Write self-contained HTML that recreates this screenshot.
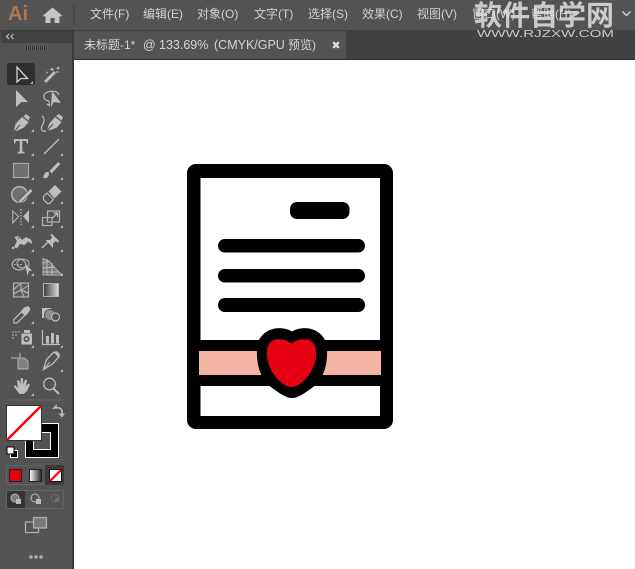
<!DOCTYPE html>
<html><head><meta charset="utf-8">
<style>
html,body{margin:0;padding:0;width:635px;height:569px;overflow:hidden;background:#fff}
body{position:relative;font-family:"Liberation Sans","Noto Sans CJK SC",sans-serif}
.a{position:absolute}
.m{position:absolute;top:7px;font-size:12px;line-height:15px;color:#d2d2d2;white-space:nowrap}
.t{position:absolute;top:38px;font-size:12.500px;line-height:15px;color:#d4d4d4;white-space:nowrap}
</style></head><body>
<div class="a" style="left:0;top:0;width:635px;height:31px;background:#535353;border-bottom:1px solid #3c3c3c;box-sizing:border-box"></div>
<div class="a" style="left:8px;top:1px;font-size:20px;line-height:26px;font-weight:bold;color:#ad7753">Ai</div>
<svg class="a" style="left:42px;top:6px" width="22" height="18" viewBox="0 0 22 18"><path d="M1 9.500 10.500 1.500 20 9.500 18.800 10.800 17.500 10V17H12.500V12H8.500V17H3.500V10L2.200 10.800Z" fill="#c4c4c4"/></svg>
<div class="a" style="left:73px;top:5px;width:2px;height:20px;background:#484848"></div>
<div class="m" style="left:90px">文件(F)</div>
<div class="m" style="left:143px">编辑(E)</div>
<div class="m" style="left:197px">对象(O)</div>
<div class="m" style="left:254px">文字(T)</div>
<div class="m" style="left:308px">选择(S)</div>
<div class="m" style="left:362px">效果(C)</div>
<div class="m" style="left:417px">视图(V)</div>
<div class="m" style="left:472px">窗口(W)</div>
<div class="m" style="left:531px">帮助(H)</div>
<svg class="a" style="left:621px;top:10px" width="11" height="8"><path d="M1.500 1.500 5.500 5.500 9.500 1.500" fill="none" stroke="#d0d0d0" stroke-width="1.500"/></svg>

<div class="a" style="left:0;top:31px;width:73px;height:538px;background:#535353"></div>
<div class="a" style="left:72px;top:30px;width:2px;height:539px;background:#3a3a3a"></div>
<div class="a" style="left:1px;top:31px;width:71px;height:12px;background:#424242"></div>
<svg class="a" style="left:5px;top:33px" width="10" height="8"><path d="M4 1 1.500 3.500 4 6M8.500 1 6 3.500 8.500 6" fill="none" stroke="#c0c0c0" stroke-width="1.200"/></svg>
<div class="a" style="left:26px;top:46px;width:19px;height:4px;background:repeating-linear-gradient(90deg,#2f2f2f 0 1px,#666 1px 2px)"></div>

<div class="a" style="left:74px;top:30px;width:561px;height:30px;background:#414141;border-bottom:1px solid #2e2e2e;box-sizing:border-box"></div>
<div class="a" style="left:74px;top:31px;width:272px;height:28px;background:#535353"></div>
<div class="t" style="left:84px;font-size:12px">未标题-1*</div>
<div class="t" style="left:143px">@</div>
<div class="t" style="left:159px">133.69%</div>
<div class="t" style="left:214px">(CMYK/GPU</div>
<div class="t" style="left:288px;font-size:12px">预览)</div>
<svg class="a" style="left:332px;top:41px" width="8" height="8"><path d="M1.200 1.200 6.800 6.800M6.800 1.200 1.200 6.800" stroke="#e2e2e2" stroke-width="2.200"/></svg>

<div class="a" style="left:7px;top:63px;width:28px;height:22px;background:#2f2f2f;border-radius:3px"></div>

<svg class="a" style="left:0;top:60px" width="73" height="509" viewBox="0 60 73 509">
<path fill="#b4b4b4" d="M33 84h-3l3-3zM34 132h-3l3-3zM63 132h-3l3-3zM34 156h-3l3-3zM63 156h-3l3-3zM34 180h-3l3-3zM63 180h-3l3-3zM34 204h-3l3-3zM63 204h-3l3-3zM34 228h-3l3-3zM63 228h-3l3-3zM34 252h-3l3-3zM63 252h-3l3-3zM34 276h-3l3-3zM63 276h-3l3-3zM34 324h-3l3-3zM34 348h-3l3-3zM63 348h-3l3-3zM63 372h-3l3-3zM34 396h-3l3-3z"/>
<g fill="#bdbdbd" stroke="none">
<path d="M17 67V82L21 78.500 27.500 78.500Z" fill="none" stroke="#d4d4d4" stroke-width="1.300"/>
<path d="M44 81 54 71 56 73 46 83Z"/><path d="M52 67l.6 1.800 1.800.6-1.800.6-.6 1.800-.6-1.800-1.800-.6 1.800-.6zM58 66l.6 1.500 1.500.6-1.500.6-.6 1.500-.6-1.500-1.500-.6 1.500-.6zM47 71l.4 1 1 .4-1 .4-.4 1-.4-1-1-.4 1-.4z"/><path d="M56 72l3 0" stroke="#bdbdbd"/>
<path d="M16 90 28 102H21.500L16 107Z"/>
<path d="M52 91 61 103 54 102 51 107Z"/><path d="M49 101C42 100 42 93 49 91.500 55 90.500 59 92.500 58.500 95M49 101 49.500 105.500 47 104" fill="none" stroke="#bdbdbd" stroke-width="1.200"/>
<path d="M13.500 131.500 15.500 124 22 117 28.500 122 24 127.500 18 130.500Z"/><path d="M23.500 116.500 26 114 30 117 28.500 120.500Z"/><path d="M14 131.500 20 125" stroke="#535353" stroke-width="1.100"/>
<path d="M47 130.500 49 124 55 117 61.500 122 57 127.500 52 129.500Z"/><path d="M56 116 59 114 63 117 61.500 120.500Z"/><path d="M47 130.500 53 124" stroke="#535353" stroke-width="1.100"/><path d="M46 131C40 132 41 127 43 124 45 121 44 117 42 116" fill="none" stroke="#bdbdbd" stroke-width="1.200"/>
<path d="M14 139H28V143.500H26.800L26 141H22.300V151.500L24.500 152V153.500H17.500V152L19.700 151.500V141H16L15.200 143.500H14Z"/>
<path d="M44 154 59 139" stroke="#bdbdbd" stroke-width="1.400" fill="none"/>
<rect x="13.500" y="163.500" width="15" height="14" fill="#6f6f6f" stroke="#ababab" stroke-width="1.200"/>
<path d="M43.500 178C43.500 173.500 46 171.500 48.500 172 50 175 48 179 43.500 178ZM49.500 171 58 162 60.500 164 51.500 173.500Z"/>
<circle cx="19.500" cy="194.500" r="7.800" fill="#6f6f6f" stroke="#b0b0b0" stroke-width="1.600"/>
<path d="M19 200 30.500 188.500 33 191 21.500 202.500 18 203.500Z" stroke="#535353" stroke-width=".7"/>
<path d="M48.500 191.500 55 185 61.500 191.500 54.500 198.500Z"/><path d="M47 193 53.500 199.500 49.500 203.500H47.500L43.500 199.500V196.500Z" fill="#535353" stroke="#bdbdbd" stroke-width="1.200"/>
<path d="M12.800 211 18.500 216.500 12.800 223Z" fill="none" stroke="#b0b0b0" stroke-width="1.200"/><path d="M29 210V223L23 216.500Z"/><path d="M21 209V225" stroke="#c8c8c8" stroke-dasharray="1.500 1.500" stroke-width="1.100"/>
<rect x="42.500" y="217.500" width="9.500" height="8" fill="none" stroke="#b4b4b4" stroke-width="1.200"/><rect x="47.500" y="211" width="12" height="11" fill="none" stroke="#b4b4b4" stroke-width="1.200"/><path d="M52 218.500 57 213.500M53.500 213H57.500V217" fill="none" stroke="#c4c4c4" stroke-width="1.200"/>
<path d="M14 247 17 241 14.500 237 19 236 22 240 26 237 31.500 240 32 244 28 241.500 24.500 245 20 244 17 248.500Z"/><circle cx="13" cy="248" r="1.200"/><path d="M20 236 18 239" stroke="#535353"/>
<path d="M42 248 48.500 241.500" stroke="#bdbdbd" stroke-width="1.300"/><path d="M45.500 240 50 240 53 236 57 240 53 243.500 53 248Z"/><path d="M51 234.500 58.500 242" stroke="#bdbdbd" stroke-width="2"/>
<ellipse cx="19" cy="264.500" rx="6.800" ry="5.500" fill="none" stroke="#b0b0b0" stroke-width="1.200"/><ellipse cx="23" cy="263.500" rx="6" ry="4.500" fill="none" stroke="#b0b0b0"/><path d="M25 263.500 32 270.500 29 271 27.500 276Z"/><path d="M14 264.500h8" stroke="#c4c4c4" stroke-dasharray="1.500 1.500"/>
<path d="M43 258.500V275H62L55 268 50 262Z" fill="#757575" stroke="#b0b0b0"/><path d="M43 263 50 261M43 268 55 267M43 272 59 272M47 259V275M52 263V275" stroke="#bdbdbd" fill="none"/>
<rect x="13.500" y="283" width="15" height="14" fill="#5f5f5f" stroke="#b0b0b0" stroke-width="1.200"/><path d="M13 290 20 284M13 294 21 290 24 297M21 290V283M21 290 28 286M21 290 28 293" stroke="#bdbdbd" fill="none"/>
<defs><linearGradient id="g" x1="0" x2="1"><stop offset="0" stop-color="#3a3a3a"/><stop offset="1" stop-color="#dcdcdc"/></linearGradient><linearGradient id="h" x1="0" x2="1"><stop offset="0" stop-color="#fff"/><stop offset="1" stop-color="#222"/></linearGradient></defs>
<rect x="43.500" y="283.500" width="15" height="13" fill="url(#g)" stroke="#b4b4b4"/>
<path d="M14 323 13.500 320 22.500 310.500 26 314 17 323Z" fill="none" stroke="#b4b4b4" stroke-width="1.300"/><path d="M20.500 312 24 307.500 28 306 30.500 308.500 29 312 25.500 316Z"/>
<path d="M42 308H51V318H42Z"/><circle cx="50" cy="315" r="5.500" fill="#8e8e8e" stroke="#535353"/><circle cx="55.500" cy="317" r="4" fill="#535353" stroke="#bdbdbd" stroke-width="1.200"/>
<path d="M12 331h2v2h-2zM15 331h2v2h-2zM18 331h2v2h-2zM12 334h2v2h-2zM15 334h2v2h-2zM12 337h2v2h-2z" fill="#858585"/>
<path d="M24 330h6v3h-6z"/><rect x="21.500" y="333.500" width="10.500" height="11" fill="#bdbdbd"/><circle cx="26.500" cy="339" r="3" fill="#535353"/><circle cx="26.500" cy="339" r="1.300" fill="#bdbdbd"/>
<path d="M42.500 330V344.500H60" fill="none" stroke="#bdbdbd" stroke-width="1.200"/><path d="M46 336h3v7.500h-3zM51 333h3v10.500h-3zM56 335h3v8.500h-3z"/>
<path d="M11 358H20M20 353V362" stroke="#bdbdbd" stroke-width="1.100" fill="none"/><path d="M18 358H24.500L28 361.500V369H18Z" fill="#7f7f7f" stroke="#b0b0b0"/>
<path d="M43.500 369.500 46.500 359.500 54 352 59.500 356 52.500 364Z" fill="none" stroke="#bdbdbd" stroke-width="1.300"/><path d="M54 352.500 56.500 351 60 354 58 357Z"/><path d="M43.500 369.500 50 362" stroke="#bdbdbd"/>
<path d="M13.500 386 15.500 385.500 18 388 17 380.500 19 380 20.500 384.500 20.800 378 22.800 378 23.500 384.500 25 379.500 27 380 26 386 28.500 383.500 30 384.500 27 391 23.500 394H19.500Z"/>
<circle cx="49.500" cy="384" r="5.800" fill="none" stroke="#bdbdbd" stroke-width="1.300"/><path d="M53.500 388.500 59 394" stroke="#bdbdbd" stroke-width="2"/>
</g>
<path d="M6 400H66" stroke="#666"/>
<path d="M53 409 56 406V408C60 407 62.500 409 62 413V415" fill="none" stroke="#bdbdbd" stroke-width="1.500"/><path d="M58.500 413.500H65L62 417.500Z" fill="#bdbdbd"/>
<rect x="25" y="423" width="34" height="35" fill="#000"/><rect x="25.500" y="423.500" width="33" height="34" fill="none" stroke="#fff"/>
<rect x="33.500" y="432.500" width="17" height="17" fill="#535353" stroke="#fff"/>
<rect x="6.500" y="405.500" width="35" height="35" fill="#fff" stroke="#333"/>
<path d="M7 440 41 406" stroke="#f00" stroke-width="2.400"/>
<rect x="10.500" y="450.500" width="7" height="7" fill="#000" stroke="#fff"/><rect x="7" y="447" width="7" height="7" fill="#fff" stroke="#000"/>
<rect x="6.500" y="465.500" width="57" height="19" rx="2" fill="#535353" stroke="#666"/>
<rect x="45" y="465" width="19" height="20" fill="#3a3a3a"/>
<rect x="9.500" y="469.500" width="12" height="12" fill="#e60012" stroke="#222"/>
<rect x="29.500" y="469.500" width="12" height="12" fill="url(#h)" stroke="#222"/>
<rect x="49.500" y="469.500" width="12" height="12" fill="#fff" stroke="#111"/><path d="M50 481 61 470" stroke="#f00" stroke-width="2.200"/>
<rect x="6.500" y="490.500" width="57" height="18" rx="2" fill="#535353" stroke="#666"/>
<rect x="7" y="491" width="18" height="17" rx="2" fill="#333"/>
<circle cx="15" cy="498" r="4" fill="#7a7a7a" stroke="#bdbdbd"/><rect x="16" y="499" width="5" height="5" fill="#bdbdbd"/>
<circle cx="35" cy="498" r="4" fill="#535353" stroke="#bdbdbd"/><rect x="36" y="499" width="5" height="5" fill="#bdbdbd"/>
<circle cx="55" cy="498" r="3.800" fill="#535353" stroke="#6e6e6e"/><path d="M55 498h4v4h-4z" fill="#6e6e6e"/>
<rect x="25.500" y="522" width="13" height="10.500" fill="#535353" stroke="#b4b4b4" stroke-width="1.200"/>
<rect x="33.500" y="517.500" width="13" height="10.500" fill="#7a7a7a" stroke="#b4b4b4" stroke-width="1.200"/>
<circle cx="31" cy="557" r="1.800" fill="#b0b0b0"/><circle cx="36" cy="557" r="1.800" fill="#b0b0b0"/><circle cx="41" cy="557" r="1.800" fill="#b0b0b0"/>
</svg>

<svg class="a" style="left:0;top:0" width="635" height="569" viewBox="0 0 635 569">
<rect x="200" y="177.500" width="180.500" height="239" fill="#fff" stroke="#aaa" stroke-width="1"/>
<path d="M196 164H384A9 9 0 0 1 393 173V420A9 9 0 0 1 384 429H196A9 9 0 0 1 187 420V173A9 9 0 0 1 196 164ZM200.500 178V416H380V178Z" fill="#000" fill-rule="evenodd"/>
<rect x="290" y="202" width="59.500" height="17" rx="7" fill="#000"/>
<rect x="218" y="239" width="147" height="13.500" rx="6.700" fill="#000"/>
<rect x="218" y="269" width="147" height="13.500" rx="6.700" fill="#000"/>
<rect x="218" y="298" width="147" height="14" rx="6.700" fill="#000"/>
<rect x="199" y="340" width="182" height="46" fill="#000"/>
<rect x="199" y="351" width="182" height="24" fill="#f4b4a4"/>
<path d="M292 331.500C297 328.500 303 327.500 309 328.500 318 330 326 337 327 347 327.500 357 326.500 367 322.500 375 319 382 315 386 309 390 303 394 298 398 292 398 286 398 281 394 275 390 269 386 265 382 261.500 375 257.500 367 256.500 357 257 347 258 337 266 330 275 328.500 281 327.500 287 328.500 292 331.500Z" fill="#000"/>
<path d="M291.500 343.500C296 340 301 338.500 307 339.500 312.500 340.500 316 345 316 352 316.500 360 314 367 310 373 306 380 298 387 291.500 387 285 387 277 380 273 373 269 367 266.500 360 267 352 267 345 270.500 340.500 276 339.500 282 338.500 287 340 291.500 343.500Z" fill="#e60012"/>
</svg>

<div class="a" style="left:474px;top:1px;font-size:28px;line-height:30px;font-weight:bold;color:rgba(225,225,225,.85);white-space:nowrap">软件自学网</div>
<svg class="a" style="left:470px;top:26px" width="150" height="14"><text x="7" y="11" font-size="10" textLength="137" lengthAdjust="spacingAndGlyphs" fill="rgba(225,225,225,.85)" font-family="Liberation Sans, sans-serif">WWW.RJZXW.COM</text></svg>
</body></html>
